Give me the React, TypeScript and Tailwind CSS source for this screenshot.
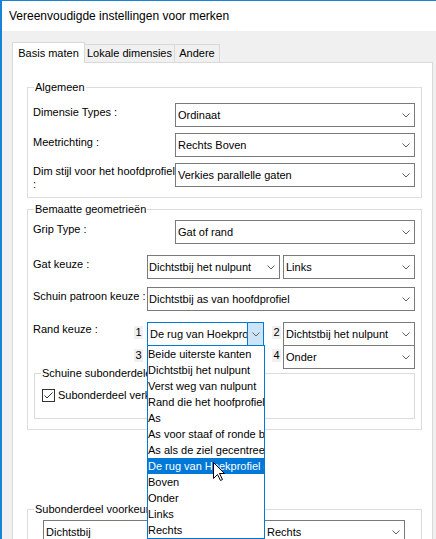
import React from 'react';

function Chevron() {
  return (
    <svg width="8" height="5" viewBox="0 0 8 5" className="block">
      <path d="M0.5 0.5 L4 4 L7.5 0.5" fill="none" stroke="#606060" strokeWidth="1" />
    </svg>
  );
}

function Combo({ cls, text, textCls = 'pl-[2px]' }: { cls: string; text: string; textCls?: string }) {
  return (
    <div className={`flex h-[24px] shrink-0 items-center border border-[#7a7a7a] bg-white ${cls}`}>
      <span className={`flex-1 overflow-hidden whitespace-nowrap leading-[16px] ${textCls}`}>{text}</span>
      <span className="mr-[4px] flex w-[8px] justify-center">
        <Chevron />
      </span>
    </div>
  );
}

function Num({ n }: { n: string }) {
  return (
    <div className="mt-[4px] flex h-[13px] w-[9px] shrink-0 items-center justify-center self-start bg-[#f0f0f0] leading-[13px]">
      {n}
    </div>
  );
}

const listItems = [
  'Beide uiterste kanten',
  'Dichtstbij het nulpunt',
  'Verst weg van nulpunt',
  'Rand die het hoofprofiel raakt',
  'As',
  'As voor staaf of ronde buis',
  'As als de ziel gecentreerd is',
  'De rug van Hoekprofiel of U-profiel',
  'Boven',
  'Onder',
  'Links',
  'Rechts',
];

export default function App() {
  return (
    <div className="relative h-[539px] w-[436px] overflow-hidden border-l-2 border-t border-[#1883d7] bg-[#f0f0f0] font-['Liberation_Sans',Arial,sans-serif] text-[11px] text-black">
      <div className="flex h-[30px] items-center bg-white pb-[1px] pl-[7px] text-[12px]">
        Vereenvoudigde instellingen voor merken
      </div>

      <div className="flex flex-col pl-[10px] pt-[11px]">
        {/* Tabs */}
        <div className="flex h-[20px] items-end">
          <div className="relative z-10 -mb-px flex h-[21px] w-[73px] items-center justify-center border border-b-0 border-[#d9d9d9] bg-white">
            Basis maten
          </div>
          <div className="-ml-px flex h-[18px] w-[91px] items-center justify-center border border-b-0 border-[#d9d9d9] bg-[#f0f0f0]">
            Lokale dimensies
          </div>
          <div className="-ml-px flex h-[18px] w-[46px] items-center justify-center border border-b-0 border-[#d9d9d9] bg-[#f0f0f0]">
            Andere
          </div>
        </div>

        {/* Panel */}
        <div className="flex h-[500px] w-[421px] flex-col border border-[#d9d9d9] bg-white pl-[14px]">
          {/* Algemeen */}
          <fieldset className="mt-[16px] w-[395px] border border-[#dcdcdc]">
            <legend className="ml-[6px] px-[1px] leading-[16px]">Algemeen</legend>
            <div className="flex flex-col gap-[6px] pb-[8px] pl-[5px] pr-[6px] pt-[8px]">
              <div className="flex">
                <div className="w-[142px] shrink-0 self-start pt-[1px] leading-[16px]">Dimensie Types :</div>
                <Combo cls="w-[240px]" text="Ordinaat" />
              </div>
              <div className="flex">
                <div className="w-[142px] shrink-0 self-start pt-[1px] leading-[16px]">Meetrichting :</div>
                <Combo cls="w-[240px]" text="Rechts Boven" />
              </div>
              <div className="flex">
                <div className="w-[142px] shrink-0 self-start whitespace-nowrap">
                  <div className="leading-[16px]">Dim stijl voor het hoofdprofiel</div>
                  <div className="leading-[10px]">:</div>
                </div>
                <Combo cls="w-[240px]" text="Verkies parallelle gaten" />
              </div>
            </div>
          </fieldset>

          {/* Bemaatte geometrieën */}
          <fieldset className="mt-[3px] w-[395px] border border-[#dcdcdc]">
            <legend className="ml-[6px] px-[1px] leading-[16px]">Bemaatte geometrieën</legend>
            <div className="flex flex-col pb-[10px] pl-[5px] pr-[6px] pt-[3px]">
              <div className="flex">
                <div className="w-[142px] shrink-0 self-start pt-[1px] leading-[16px]">Grip Type :</div>
                <Combo cls="w-[240px]" text="Gat of rand" />
              </div>
              <div className="mt-[11px] flex">
                <div className="w-[114px] shrink-0 self-start pt-[1px] leading-[16px]">Gat keuze :</div>
                <Combo cls="w-[133px]" text="Dichtstbij het nulpunt" textCls="pl-[1px]" />
                <Combo cls="ml-[3px] w-[132px]" text="Links" />
              </div>
              <div className="mt-[8px] flex">
                <div className="w-[114px] shrink-0 self-start whitespace-nowrap pt-[1px] leading-[16px]">
                  Schuin patroon keuze :
                </div>
                <Combo cls="w-[268px]" text="Dichtstbij as van hoofdprofiel" textCls="pl-[1px]" />
              </div>
              <div className="mt-[11px] flex">
                <div className="w-[101px] shrink-0 self-start leading-[14px]">Rand keuze :</div>
                <Num n="1" />
                <div className="relative z-20 ml-[4px] flex h-[24px] w-[117px] shrink-0 border border-[#0078d7] bg-white">
                  <span className="flex-1 overflow-hidden whitespace-nowrap pl-[2px] leading-[22px]">
                    De rug van Hoekprofiel of U-profiel
                  </span>
                  <span className="flex w-[16px] shrink-0 items-center justify-center border-l border-[#0078d7] bg-[#cce4f7]">
                    <Chevron />
                  </span>
                  <div className="absolute left-[-1px] top-[22px] flex w-[118px] flex-col border border-[#0078d7] bg-white">
                    {listItems.map((t, i) => (
                      <div
                        key={t}
                        className={
                          i === 7
                            ? 'h-[16px] overflow-hidden whitespace-nowrap bg-[#0078d7] leading-[16px] text-white'
                            : 'h-[16px] overflow-hidden whitespace-nowrap leading-[16px]'
                        }
                      >
                        {t}
                      </div>
                    ))}
                  </div>
                </div>
                <div className="ml-[8px] flex">
                  <Num n="2" />
                </div>
                <Combo cls="ml-[2px] w-[132px]" text="Dichtstbij het nulpunt" />
              </div>
              <div className="-mt-px flex">
                <div className="w-[101px] shrink-0" />
                <Num n="3" />
                <Combo cls="ml-[4px] w-[117px]" text="Beide uiterste kanten" />
                <div className="ml-[8px] flex">
                  <Num n="4" />
                </div>
                <Combo cls="ml-[2px] w-[132px]" text="Onder" />
              </div>

              <fieldset className="-mt-[4px] ml-[1px] w-[381px] border border-[#dcdcdc]">
                <legend className="ml-[6px] px-[1px] leading-[16px]">Schuine subonderdelen</legend>
                <div className="flex h-[13px] items-center pl-[7px] mt-[8px]">
                  <div className="flex h-[13px] w-[13px] shrink-0 items-center justify-center border border-[#333333] bg-white">
                    <svg width="11" height="11" viewBox="0 0 11 11" className="block">
                      <path d="M1.5 5.5 L4 8 L9.5 2.5" fill="none" stroke="#333333" strokeWidth="1" />
                    </svg>
                  </div>
                  <span className="ml-[3px] whitespace-nowrap leading-[13px]">Subonderdeel verkiezen</span>
                </div>
                <div className="h-[16px]" />
              </fieldset>
            </div>
          </fieldset>

          {/* Subonderdeel voorkeuren */}
          <fieldset className="mt-[71px] w-[395px] border border-[#dcdcdc]">
            <legend className="ml-[6px] px-[1px] leading-[16px]">Subonderdeel voorkeuren</legend>
            <div className="flex pb-[10px] pl-[15px] pt-[3px]">
              <Combo cls="w-[175px]" text="Dichtstbij" />
              <Combo cls="ml-[13px] w-[174px]" text="Rechts" textCls="pl-[35px]" />
            </div>
          </fieldset>
        </div>
      </div>

      {/* Mouse cursor */}
      <svg width="12" height="19" viewBox="0 0 12 19" className="absolute left-[211px] top-[461px] z-30">
        <path
          d="M0.5 0.5 L0.5 16.5 L4.5 12.5 L7.5 18.5 L9.5 17.5 L6.5 11.5 L11.5 11.5 Z"
          fill="#ffffff"
          stroke="#000000"
          strokeWidth="1"
          strokeLinejoin="miter"
        />
      </svg>
    </div>
  );
}
